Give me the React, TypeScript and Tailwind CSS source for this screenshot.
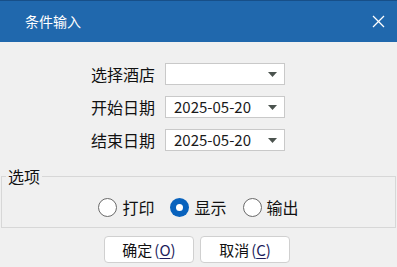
const cjk = { fontFamily: '"Noto Sans CJK SC", "Noto Sans", sans-serif' };

function Combo({ value }: { value?: string }) {
  return (
    <div className="flex items-center justify-between w-[120px] h-[22px] border border-[#c9c9c9] bg-white pl-[8px] pr-[7px]">
      <span className="text-[15px] leading-[20px] text-[#1a1a1a]">{value ?? ""}</span>
      <svg width="9" height="5" viewBox="0 0 9 5">
        <polygon points="0,0 9,0 4.5,5" fill="#4b534e" />
      </svg>
    </div>
  );
}

function Radio({ label, checked }: { label: string; checked?: boolean }) {
  return (
    <div className="flex items-center gap-[5px]">
      {checked ? (
        <span className="flex items-center justify-center w-[19px] h-[19px] rounded-full bg-[#0862bd]">
          <span className="w-[7px] h-[7px] rounded-full bg-white" />
        </span>
      ) : (
        <span className="w-[19px] h-[19px] rounded-full border border-[#6a6a6a] bg-white" />
      )}
      <span className="text-[16px] leading-[20px] text-[#111]">{label}</span>
    </div>
  );
}

function Button({ text, hot }: { text: string; hot: string }) {
  return (
    <button className="flex items-center justify-center w-[90px] h-[27px] rounded-[4px] border border-[#d0d0d0] bg-white text-[15px] leading-[20px] text-[#111]">
      {text}
      <span className="ml-[2px] text-[#1c1c5c]">
        (<span className="underline underline-offset-2">{hot}</span>)
      </span>
    </button>
  );
}

export default function App() {
  const rows = [
    { label: "选择酒店", value: undefined },
    { label: "开始日期", value: "2025-05-20" },
    { label: "结束日期", value: "2025-05-20" },
  ];

  return (
    <div className="w-[397px] h-[267px] bg-[#f0f0f0] overflow-hidden" style={cjk}>
      <div className="flex items-center justify-between h-[42px] bg-[#2068ad] border-t border-[#174f88] pl-[25px] pr-[12px]">
        <span className="text-[14px] text-white">条件输入</span>
        <svg width="13" height="13" viewBox="0 0 13 13" stroke="white" strokeWidth="1.3">
          <line x1="1" y1="1" x2="12" y2="12" />
          <line x1="12" y1="1" x2="1" y2="12" />
        </svg>
      </div>

      <div className="flex flex-col gap-[11px] mt-[21px] pl-[91px]">
        {rows.map((r) => (
          <div key={r.label} className="flex items-center">
            <span className="w-[64px] text-[16px] leading-[22px] text-[#111]">{r.label}</span>
            <div className="ml-[10px]">
              <Combo value={r.value} />
            </div>
          </div>
        ))}
      </div>

      <div className="px-[1px] mt-[15px]">
        <fieldset className="border border-[#d7d7d7] pl-[4px] h-[62px]">
          <legend className="px-[2px] text-[16px] leading-[20px] text-[#111]">选项</legend>
          <div className="flex justify-center gap-[16px] mt-[11px] pr-[4px]">
            <Radio label="打印" />
            <Radio label="显示" checked />
            <Radio label="输出" />
          </div>
        </fieldset>
      </div>

      <div className="flex justify-center gap-[6px] mt-[8px] pr-[3px]">
        <Button text="确定" hot="O" />
        <Button text="取消" hot="C" />
      </div>
    </div>
  );
}
